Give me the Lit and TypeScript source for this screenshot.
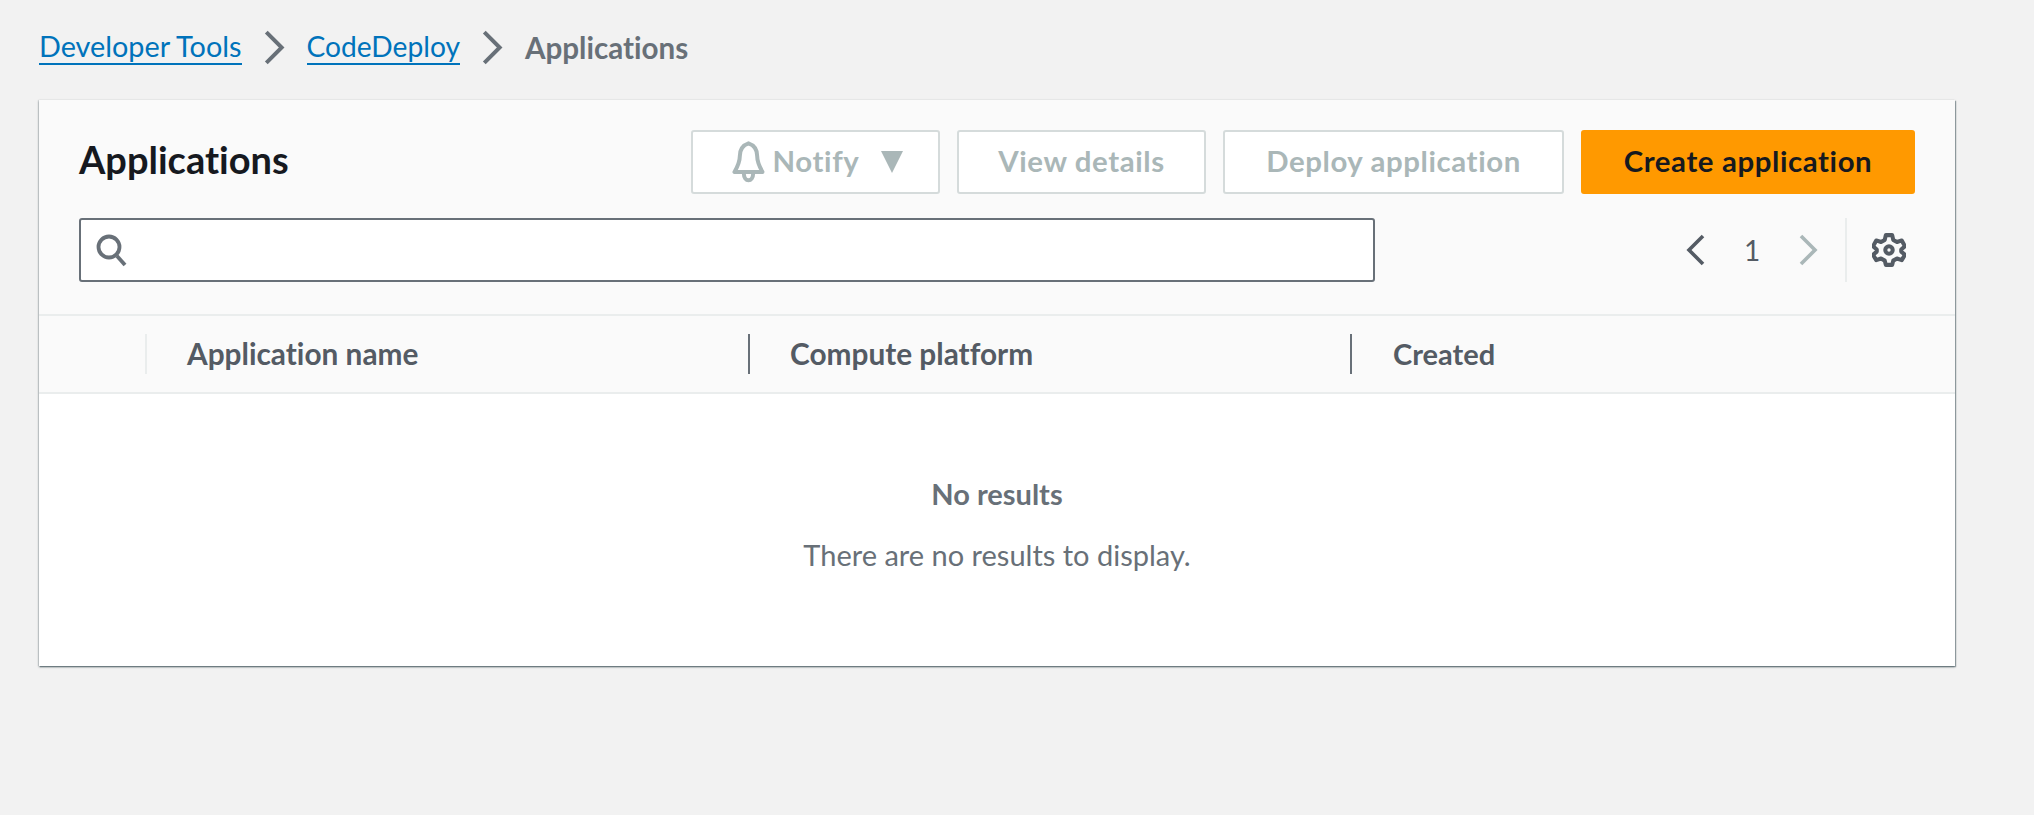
import { LitElement, html, css } from 'lit';
import { customElement } from 'lit/decorators.js';

const chevron = (cls: string) => html`<svg class=${cls} viewBox="0 0 20 32" fill="none" stroke="currentColor" stroke-width="3.6"><path d="M3 2 L17 16 L3 30"></path></svg>`;

@customElement('app-root')
export class AppRoot extends LitElement {
  static styles = css`
    :host {
      display: block;
      min-height: 815px;
      background: #f2f2f2;
      font-family: "Lato", "Noto Sans", sans-serif;
      font-variant-ligatures: none;
      color: #16191f;
      box-sizing: border-box;
      padding: 0 79px 0 39px;
    }
    .crumbs {
      height: 100px;
      display: flex;
      align-items: center;
      font-size: 28.8px;
      padding-bottom: 6px;
      box-sizing: border-box;
    }
    .crumbs a {
      color: #0073bb;
      text-decoration: none;
      border-bottom: 2px solid #0073bb;
      line-height: 34px;
    }
    .crumbs a.short { font-size: 28.2px; }
    .crumbs .sep {
      width: 22px;
      height: 41px;
      margin: 0 22px 0 21px;
      color: #687078;
    }
    .crumbs .current {
      color: #687078;
      font-weight: 700;
      font-size: 29.6px;
    }
    .card {
      background: #fff;
      box-shadow: 0 1px 2px 0 rgba(0, 28, 36, 0.5), 1px 1px 1px 0 rgba(0, 28, 36, 0.3), -1px 0 1px 0 rgba(0, 28, 36, 0.08);
    }
    .top {
      background: #fafafa;
      padding: 30px 40px 32px 40px;
      border-bottom: 2px solid #eaeded;
    }
    .title-row {
      display: flex;
      align-items: center;
      justify-content: space-between;
      height: 64px;
    }
    h1 {
      margin: 0 0 6px;
      font-size: 38px;
      font-weight: 700;
      line-height: 40px;
      color: #16191f;
    }
    .actions {
      display: flex;
      gap: 17px;
    }
    .btn {
      height: 64px;
      box-sizing: border-box;
      border: 2px solid #d5dbdb;
      border-radius: 3px;
      background: #fff;
      color: #aab7b8;
      font: 700 29.4px "Lato", sans-serif;
      font-variant-ligatures: none;
      letter-spacing: 0.6px;
      display: flex;
      align-items: center;
      justify-content: center;
      padding: 0 0 4px;
    }
    .notify { width: 249px; gap: 8px; padding-left: 4px; }
    .notify .bell { width: 33px; height: 44px; margin-top: 4px; }
    .notify .caret { width: 22px; height: 22px; margin-left: 14px; margin-top: 4px; }
    .view { width: 249px; }
    .deploy { width: 341px; }
    .create {
      width: 334px;
      background: #ff9900;
      border-color: #ff9900;
      color: #16191f;
    }
    .search-row {
      display: flex;
      align-items: center;
      justify-content: space-between;
      margin-top: 24px;
      height: 64px;
    }
    .search {
      width: 1296px;
      height: 64px;
      box-sizing: border-box;
      border: 2px solid #687078;
      border-radius: 3px;
      background: #fff;
      display: flex;
      align-items: center;
      padding-left: 15px;
    }
    .search svg { width: 32px; height: 34px; color: #687078; }
    .pager {
      display: flex;
      align-items: center;
      height: 64px;
      color: #545b64;
      font-size: 28px;
    }
    .pager .prev { width: 20px; height: 32px; color: #545b64; transform: scaleX(-1); }
    .pager .next { width: 20px; height: 32px; color: #aab7b8; }
    .pager .num { width: 92px; text-align: center; }
    .pager .divider {
      width: 2px;
      height: 64px;
      background: #eaeded;
      margin: 0 25px 0 27px;
    }
    .pager .gear { width: 34px; height: 34px; color: #545b64; margin-right: 9px; }
    .thead {
      display: grid;
      grid-template-columns: 108px 603px 602px 1fr;
      height: 76px;
      background: #fafafa;
      border-bottom: 2px solid #eaeded;
      align-items: center;
      font-size: 29.8px;
      font-weight: 700;
      color: #545b64;
    }
    .th {
      height: 40px;
      display: flex;
      align-items: center;
      padding: 0 0 2px 40px;
      border-right: 2px solid #687078;
      box-sizing: border-box;
    }
    .th.sel { border-right-color: #eaeded; }
    .th.last { border-right: none; padding-left: 41px; font-size: 29px; }
    .empty {
      height: 272px;
      display: flex;
      flex-direction: column;
      align-items: center;
      color: #687078;
      font-size: 29px;
      padding-top: 82px;
      box-sizing: border-box;
    }
    .empty b { font-weight: 700; line-height: 36px; }
    .empty p { margin: 25px 0 0; line-height: 36px; }
  `;

  render() {
    return html`
      <nav class="crumbs">
        <a href="#">Developer Tools</a>
        ${chevron('sep')}
        <a class="short" href="#">CodeDeploy</a>
        ${chevron('sep')}
        <span class="current">Applications</span>
      </nav>
      <section class="card">
        <div class="top">
          <div class="title-row">
            <h1>Applications</h1>
            <div class="actions">
              <button class="btn notify">
                <svg class="bell" viewBox="0 0 24 33" fill="none" stroke="currentColor" stroke-width="3" stroke-linejoin="round">
                  <path d="M12 2.5 C7.5 4 5.5 8 5.5 12 C5.5 17 3.5 20.5 1.5 24 L22.5 24 C20.5 20.5 18.5 17 18.5 12 C18.5 8 16.5 4 12 2.5 Z"></path>
                  <path d="M8.5 25 C8.5 32 15.5 32 15.5 25"></path>
                </svg>
                Notify
                <svg class="caret" viewBox="0 0 22 22"><path d="M0 0 H22 L11 22 Z" fill="currentColor"></path></svg>
              </button>
              <button class="btn view">View details</button>
              <button class="btn deploy">Deploy application</button>
              <button class="btn create">Create application</button>
            </div>
          </div>
          <div class="search-row">
            <div class="search">
              <svg viewBox="0 0 32 34" fill="none" stroke="currentColor" stroke-width="3.8">
                <circle cx="13" cy="14" r="10.5"></circle>
                <path d="M21 23 L29 32"></path>
              </svg>
            </div>
            <div class="pager">
              ${chevron('prev')}
              <span class="num">1</span>
              ${chevron('next')}
              <span class="divider"></span>
              <svg class="gear" viewBox="0 0 32 32" fill="none" stroke="currentColor" stroke-width="3.8" stroke-linejoin="round">
                <path d="M13 2 H19 L20 6.5 L23.5 8.5 L28 7 L31 12.5 L27.5 15.5 V17.5 L31 20.5 L28 25.5 L23.5 24 L20 26 L19 30 H13 L12 26 L8.5 24 L4 25.5 L1 20.5 L4.5 17.5 V15.5 L1 12.5 L4 7 L8.5 8.5 L12 6.5 Z"></path>
                <circle cx="16" cy="16" r="3.5"></circle>
              </svg>
            </div>
          </div>
        </div>
        <div class="thead">
          <div class="th sel"></div>
          <div class="th">Application name</div>
          <div class="th">Compute platform</div>
          <div class="th last">Created</div>
        </div>
        <div class="empty">
          <b>No results</b>
          <p>There are no results to display.</p>
        </div>
      </section>
    `;
  }
}
